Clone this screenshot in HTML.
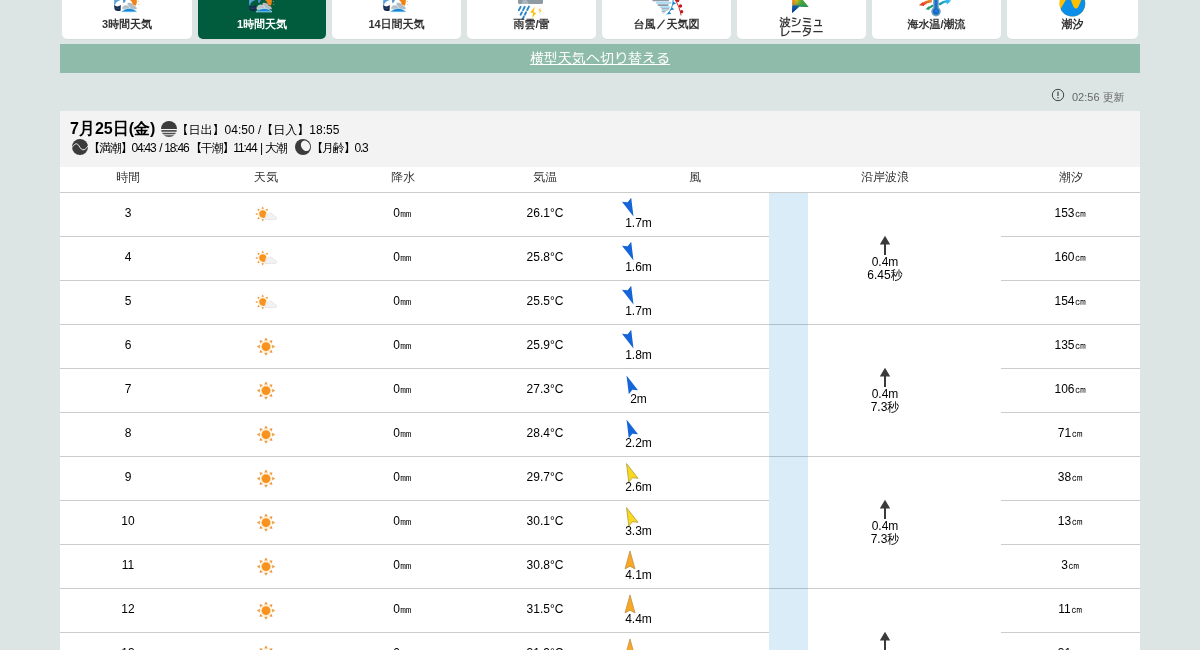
<!DOCTYPE html>
<html lang="ja">
<head>
<meta charset="utf-8">
<title>1時間天気</title>
<style>
*{box-sizing:border-box}
html,body{margin:0;padding:0}
body{background:#dce5e3;font-family:"Liberation Sans","WenQuanYi Zen Hei Mono","WenQuanYi Zen Hei",sans-serif;font-size:12px;line-height:14px;color:#000;overflow:hidden;width:1200px;height:650px}
.wrap{position:relative;width:1080px;margin:0 auto;will-change:transform}
.defs{position:absolute;width:0;height:0;overflow:hidden}
.tabs{position:relative;height:39px;margin:0;padding:0;list-style:none}
.tabs li{position:absolute;top:0;height:39px;background:#fff;border-radius:0 0 5px 5px;text-align:center;color:#333;font-weight:900;font-size:11px;line-height:12px;box-shadow:0 1px 0 rgba(0,0,0,.03)}
.tabs li.on{background:#005c3c;color:#fff}
.tabs li svg{position:absolute;top:0;width:40px;height:20px;overflow:hidden}
.tabs li span{position:absolute;left:0;right:0;top:18px}
.tabs li span.two{top:17px;line-height:10px}
.tabs li:nth-child(1){left:2px;width:130px}
.tabs li:nth-child(2){left:138px;width:128px}
.tabs li:nth-child(3){left:272px;width:129px}
.tabs li:nth-child(4){left:407px;width:129px}
.tabs li:nth-child(5){left:542px;width:129px}
.tabs li:nth-child(6){left:677px;width:129px}
.tabs li:nth-child(7){left:812px;width:129px}
.tabs li:nth-child(8){left:947px;width:131px}
.sw{display:block;margin-top:5px;height:29px;background:#8fbcaa;color:#fff;text-align:center;font-size:14px;line-height:16px;padding-top:6px;text-decoration:underline}
.upd{height:38px;position:relative;color:#666;font-size:11px;line-height:12px}
.upd svg{position:absolute;left:991px;top:15px;width:14px;height:14px}
.upd span{position:absolute;left:1012px;top:18px;white-space:nowrap}
.card{background:#fff}
.dh{height:56px;background:#f3f3f3;position:relative;color:#000}
.dh div{position:absolute;white-space:nowrap;line-height:14px}
.dh b{position:absolute;left:10px;top:9px;font-size:16px;font-weight:900;line-height:18px;color:#000;white-space:nowrap}
.dh svg{position:absolute;width:18px;height:18px}
.dh .t1{left:116.6px;top:12px}
.dh .t2{left:28.3px;top:30px;letter-spacing:-1.2px}
.dh .t3{left:251.3px;top:30px;letter-spacing:-1.2px}
.dh .i1{left:100px;top:9px}
.dh .i2{left:11px;top:27px}
.dh .i3{left:234px;top:27px}
table.wt{border-collapse:separate;border-spacing:0;table-layout:fixed;width:1080px}
.wt th{height:26px;padding:3px 0 0;font-weight:normal;color:#333;border-bottom:1px solid #ccc;text-align:center;vertical-align:top;line-height:14px}
.wt td{height:44px;padding:13px 0 0;text-align:center;border-bottom:1px solid #ccc;vertical-align:top;line-height:14px}
.c1{width:136px}.c2{width:139px}.c3{width:135px}.c4{width:150px}.c5{width:149px}.c6{width:232px}.c7{width:139px}
.wt td.ic{padding:0;position:relative}
.wi{position:absolute;left:50%;top:9px;margin-left:-12px;width:24px;height:24px}
.wt td.wd{padding:0;position:relative}
.wa{position:absolute;left:0;top:5px;width:20px;height:20px}
.wd span{position:absolute;left:0;top:23px;width:37px;text-align:center}
.wb{fill:#1565d8}.wy{fill:#f8d820;stroke:#b39a3a;stroke-width:.7}.wo{fill:#f9a825;stroke:#b8863c;stroke-width:.7}
.wt td.wv{position:relative;padding:0}
.bar{position:absolute;left:0;top:0;bottom:-1px;width:39px;background:rgba(0,127,204,.15)}
.wt tr:first-child td.wv .bar{top:0}
.wvc{position:absolute;left:0;right:0;top:41.5px}
.wvc p{margin:0;line-height:13px;position:relative;top:1px}
.up{display:block;width:20px;height:20px;margin:0 auto;position:relative;left:-.3px}
.dh .t2 i{font-style:normal}
.wt th.c2,.wt th.c3,.wt th.c5,.wt th.c7{padding-left:1px}
</style>
</head>
<body>
<svg class="defs" aria-hidden="true">
<defs>
<linearGradient id="gw" x1="0" y1="0" x2="0" y2="1"><stop offset="0" stop-color="#f2c40c"/><stop offset=".32" stop-color="#8fb03a"/><stop offset=".5" stop-color="#0c56a8"/><stop offset="1" stop-color="#083a86"/></linearGradient>
<linearGradient id="gg" x1="0" y1="0" x2="1" y2="0"><stop offset="0" stop-color="#2ea043" stop-opacity="0"/><stop offset=".45" stop-color="#2ea043" stop-opacity=".85"/><stop offset="1" stop-color="#2a9a40"/></linearGradient>
<linearGradient id="go" x1="0" y1="0" x2="1" y2="0"><stop offset="0" stop-color="#e8761e"/><stop offset="1" stop-color="#e8761e" stop-opacity="0"/></linearGradient>
<linearGradient id="gr" x1="1" y1="0" x2="0" y2="1"><stop offset="0" stop-color="#f08a24"/><stop offset="1" stop-color="#e0402a"/></linearGradient>
<linearGradient id="gc" x1="0" y1="1" x2="1" y2="0"><stop offset="0" stop-color="#12909c"/><stop offset="1" stop-color="#2bb8ee"/></linearGradient>
<symbol id="dart" viewBox="0 0 20 20"><path d="M10 0.9 L15 18.9 L10 16.2 L5 18.9 Z" stroke-linejoin="round"/></symbol>
<symbol id="up" viewBox="0 0 20 20"><path d="M10 0.8 L15.2 9.6 L11 9.6 L11 20 L9 20 L9 9.6 L4.8 9.6 Z" fill="#3a3a3a"/></symbol>
<symbol id="i-sun" viewBox="0 -0.6 24 24"><circle cx="12" cy="12" r="5.9" fill="#fff1d8"/><circle cx="12" cy="12" r="4.4" fill="#f7931e"/><g fill="#ea9a45"><path d="M12 2.9 L13.9 5.8 L10.1 5.8 Z"/><path d="M12 2.9 L13.9 5.8 L10.1 5.8 Z" transform="rotate(45 12 12)"/><path d="M12 2.9 L13.9 5.8 L10.1 5.8 Z" transform="rotate(90 12 12)"/><path d="M12 2.9 L13.9 5.8 L10.1 5.8 Z" transform="rotate(135 12 12)"/><path d="M12 2.9 L13.9 5.8 L10.1 5.8 Z" transform="rotate(180 12 12)"/><path d="M12 2.9 L13.9 5.8 L10.1 5.8 Z" transform="rotate(225 12 12)"/><path d="M12 2.9 L13.9 5.8 L10.1 5.8 Z" transform="rotate(270 12 12)"/><path d="M12 2.9 L13.9 5.8 L10.1 5.8 Z" transform="rotate(315 12 12)"/></g></symbol>
<symbol id="i-pc" viewBox="0 0 24 24"><circle cx="8.7" cy="12" r="4.9" fill="#fff1d8"/><g fill="#e8963f"><path d="M8.7 4.6 L10 6.7 L7.4 6.7 Z"/><path d="M8.7 4.6 L10 6.7 L7.4 6.7 Z" transform="rotate(45 8.7 12)"/><path d="M8.7 4.6 L10 6.7 L7.4 6.7 Z" transform="rotate(-45 8.7 12)"/><path d="M8.7 4.6 L10 6.7 L7.4 6.7 Z" transform="rotate(-90 8.7 12)"/><path d="M8.7 4.6 L10 6.7 L7.4 6.7 Z" transform="rotate(-135 8.7 12)"/><path d="M8.7 4.6 L10 6.7 L7.4 6.7 Z" transform="rotate(180 8.7 12)"/></g><path d="M5.3 12 a3.4 3.6 0 0 1 3.4 -3.8 c2 0 3.3 1.3 3.6 2.6 L10.6 16 C7.6 16 5.3 14.4 5.3 12 Z" fill="#f7931e"/><path d="M11 17.6 c0.2 -3 1.4 -5.6 4.4 -6.4 c2.4 -0.4 4.2 1 5 3.2 c1.4 0 2.2 0.9 2.2 1.7 c0 0.9 -0.7 1.5 -1.6 1.5 Z" fill="#f2f2f5" stroke="#d9d9df" stroke-width=".6"/></symbol>
<symbol id="t-w" viewBox="0 0 40 20"><path d="M7.2 0 L13.6 0 C11 1 9.4 2 8.6 3.4 C8 4.6 8 5.6 8.4 6.6 L7.4 6.4 C7 4.4 7 2 7.2 0 Z" fill="#5aa2da"/><path d="M7.3 5 C8.6 6.8 11.4 6.9 13.9 5.1 C13.7 7 13.6 9 13.8 10.4 C11.8 11.3 9.4 11.2 8.2 10.2 C7.3 9 7.1 7 7.3 5 Z" fill="#14294a"/><path d="M8.3 7.2 C9.8 8.1 11.4 8 12.8 7.4 L12.6 8.4 C11.2 9 9.6 9 8.6 8.4 Z" fill="#2a4d7a"/><path d="M16 0 L18.8 0 C18.6 1.4 17.6 2.6 16.4 3.2 Z" fill="#4d94cc"/><path d="M22.8 0 L29.8 0 C30 2.4 29.6 4.4 28.6 5.8 L25.6 4.4 C25.4 2.4 24.4 0.9 22.8 0 Z" fill="#ee8418"/><circle cx="31.3" cy="1.4" r=".5" fill="#f0a050"/><circle cx="31.9" cy="4.5" r=".5" fill="#f0a050"/><path d="M20.6 3.1 C23.4 2.2 25.8 3.6 26.6 5.6 C28.6 5.8 29.8 7.4 29.9 9.3 L21 9.3 C20.8 7 20.4 5 20.6 3.1 Z" fill="#b3bcc4"/><path d="M15 9.3 C14.6 6.8 16.4 4.8 19 4.9 C20.6 5 22 5.8 22.8 7.2 L23 9.3 Z" fill="#b8c0c8" stroke="#fff" stroke-width=".5"/><path d="M14.2 11.9 C17 9.2 20 8.2 22.8 8.4 C25.6 8.6 28.2 9.8 30 11.9 Z" fill="#1a86d4" stroke="#bfeafc" stroke-width=".7"/></symbol>
</defs>
</svg>
<div class="wrap">
<ul class="tabs">
<li><svg style="left:45px" viewBox="0 0 40 20"><use href="#t-w"/></svg><span>3時間天気</span></li>
<li class="on"><svg style="left:44px" viewBox="0 0 40 20"><use href="#t-w"/></svg><span>1時間天気</span></li>
<li><svg style="left:44px" viewBox="0 0 40 20"><use href="#t-w"/></svg><span>14日間天気</span></li>
<li><svg style="left:44px" viewBox="511 0 40 20"><path d="M518 0 H543 V2.8 a1.1 1.1 0 0 1 -1.1 1.1 H519.1 a1.1 1.1 0 0 1 -1.1 -1.1 Z" fill="#8f9ba3"/><path d="M523 0 L526.5 0 L529 3.9 L521.5 3.9 Z" fill="#a9b6bd"/><g stroke="#2a85c8" stroke-width="1.9" stroke-linecap="round" fill="none"><path d="M520.6 6.8 L518.9 10.2"/><path d="M524.7 6.8 L523 10.2"/><path d="M528.9 6.6 L527.2 10"/><path d="M521.9 12.3 L520.6 14.7"/><path d="M526.1 12.3 L524.8 14.7"/><path d="M523.8 16.6 L522.4 19.6"/></g><path d="M535 6.8 L530 12.4 L533 13 L532.3 18 L536.2 13 L533.6 12.2 Z" fill="#fdc30e"/><path d="M540.3 7.4 L538.2 10.4 L539.8 10.8 L539.4 13.4 L541.8 10.6 L540.2 10.1 Z" fill="#f5c533"/></svg><span>雨雲/雷</span></li>
<li><svg style="left:44.5px" viewBox="646.5 0 40 20"><g stroke-linecap="round" fill="none"><path d="M652.8 .5 H667.6" stroke="#8997a6" stroke-width="1.7"/><path d="M656.4 2.7 H670" stroke="#a6d7f0" stroke-width="2"/><path d="M657.8 5.1 H667.4" stroke="#8c99a8" stroke-width="1.6"/><path d="M660 7.1 H668.8" stroke="#a9d9f1" stroke-width="1.6"/><path d="M661.6 8.9 H668.2" stroke="#8f9caa" stroke-width="1.4"/><path d="M661.8 10.4 H666.6" stroke="#a9d9f1" stroke-width="1.2"/><path d="M661.6 11.7 H664.8" stroke="#93a0ad" stroke-width="1"/><path d="M662.6 13.1 H663.6" stroke="#a8b4be" stroke-width=".8"/></g><path d="M672.6 0 C672.4 5.6 670.6 10.6 666.3 14.6" stroke="#1b86cc" stroke-width=".9" fill="none"/><path d="M672.7 1.6 L675.6 3.5 L672.2 5 Z M671.4 7.2 L673.8 9.6 L669.8 10.2 Z M668.9 11.4 L670.6 14 L666.6 14.2 Z" fill="#1b86cc"/><path d="M674.8 0 C677.6 4.6 679.6 9.6 680.6 15.4" stroke="#c4161c" stroke-width=".9" fill="none"/><circle cx="677.1" cy=".5" r="1.8" fill="#c4161c"/><circle cx="680" cy="6" r="1.7" fill="#c4161c"/><circle cx="681.2" cy="11.7" r="1.6" fill="#c4161c"/></svg><span>台風／天気図</span></li>
<li><svg style="left:44.2px" viewBox="781.5 0 40 20"><path d="M792.9 0 L803.3 0 L809 6.9 L800 6.4 L792.9 12.9 C792.4 12.2 792.4 11.6 792.5 11 Z" fill="url(#gw)"/><path d="M797 0 L803.3 0 L809 6.9 L800 6.4 L796.4 9.7 Z" fill="url(#gg)"/><path d="M792.9 0 L797.4 0 L797.2 4.4 L792.8 5.2 Z" fill="url(#go)"/></svg><span class="two">波シミュ<br>レーター</span></li>
<li><svg style="left:44px" viewBox="916.5 0 40 20"><path d="M932.4 .9 C928.6 1 925.4 2.6 922.8 4.6" stroke="url(#gr)" stroke-width="2.6" fill="none"/><path d="M919.4 5.3 L923.4 2 L924.6 6 Z" fill="#e2452a"/><path d="M933.6 5.2 C931.8 6.8 930 7.8 928.4 8.3" stroke="#1f9d6c" stroke-width="2.2" fill="none"/><path d="M926 9.2 L929.4 6.3 L930 10 Z" fill="#1f9d6c"/><path d="M939.6 4.6 C942.6 2.4 945.8 1.2 949.4 .9" stroke="url(#gc)" stroke-width="2.4" fill="none"/><path d="M951.8 .4 L947.4 4.6 L946.6 0 Z" fill="#2bb8ee"/><rect x="933.7" y="-2" width="5.6" height="12" rx="2.6" fill="#6fa3b8"/><circle cx="936.5" cy="11.6" r="4.8" fill="#6fa3b8"/><rect x="935" y="-2" width="3" height="12" fill="#1a6fd0"/><circle cx="936.5" cy="11.6" r="3.2" fill="#1668cc"/><circle cx="936.8" cy="11" r="1.2" fill="#2f80dc"/></svg><span>海水温/潮流</span></li>
<li><svg style="left:45.3px" viewBox="1052.5 0 40 20"><clipPath id="cc"><circle cx="1072.8" cy="3.5" r="12.95"/></clipPath><circle cx="1072.8" cy="3.5" r="12.95" fill="#fcc000"/><path clip-path="url(#cc)" d="M1058 12 C1062 9 1064.2 3 1066.4 0 C1068 -2 1070.4 -2 1071.4 0 C1073 3.6 1073.8 8.5 1076.4 8.5 C1079 8.5 1080 3.8 1081.8 0 L1090 -4 L1090 20 L1056 20 Z" fill="#0b8fe8"/></svg><span>潮汐</span></li>
</ul>
<a class="sw">横型天気へ切り替える</a>
<div class="upd"><svg viewBox="0 0 14 14"><circle cx="7" cy="7" r="5.7" fill="none" stroke="#444" stroke-width="1"/><rect x="6.4" y="3.5" width="1.2" height="4.5" fill="#444"/><rect x="6.4" y="9" width="1.2" height="1.4" fill="#444"/></svg><span>02:56 更新</span></div>
<div class="card">
<div class="dh">
<b>7月25日(金)</b>
<svg class="i1" viewBox="0 0 18 18"><clipPath id="c1"><circle cx="9" cy="9" r="8"/></clipPath><g clip-path="url(#c1)" fill="#3b3b3b"><rect x="0" y="0" width="18" height="9"/><rect x="0" y="10" width="18" height="1.8" fill="#555"/><rect x="0" y="12.8" width="18" height="1.5" fill="#4a4a4a"/><rect x="0" y="15.2" width="18" height="2.8" fill="#555"/></g></svg>
<div class="t1">【日出】04:50 /【日入】18:55</div>
<svg class="i2" viewBox="0 0 18 18"><circle cx="9" cy="9" r="8" fill="#3b3b3b"/><path d="M1 9.6 C3 6.2 5.2 5 6.8 6.4 C8.6 8 9.6 11.6 11.8 11.8 C13.6 12 15.4 10.4 17 8" stroke="#f3f3f3" stroke-width="1" fill="none"/></svg>
<div class="t2">【満潮】04:43<i style="margin-left:1.7px"> </i>/<i style="margin-left:.7px"> </i>18:46<i style="margin-left:1.8px">【干潮】11:44</i><i style="margin-left:1.3px"> </i>|<i style="margin-left:1.2px"> </i>大潮</div>
<svg class="i3" viewBox="0 0 18 18"><circle cx="9" cy="9" r="8" fill="#3b3b3b"/><ellipse cx="11.5" cy="7.8" rx="4.3" ry="5.5" transform="rotate(-28 11.5 7.8)" fill="#f3f3f3"/></svg>
<div class="t3">【月齢】0.3</div>
</div>
<table class="wt">
<thead><tr><th class="c1">時間</th><th class="c2">天気</th><th class="c3">降水</th><th class="c4">気温</th><th class="c5">風</th><th class="c6">沿岸波浪</th><th class="c7">潮汐</th></tr></thead>
<tbody>
<tr><td>3</td><td class="ic"><svg class="wi" viewBox="0 0 24 24"><use href="#i-pc"/></svg></td><td>0㎜</td><td>26.1°C</td><td class="wd"><svg class="wa wb" viewBox="0 0 20 20" style="transform:rotate(157.5deg)"><use href="#dart"/></svg><span>1.7m</span></td><td class="wv" rowspan="3"><div class="bar"></div><div class="wvc"><svg class="up" viewBox="0 0 20 20"><use href="#up"/></svg><p>0.4m</p><p>6.45秒</p></div></td><td>153㎝</td></tr>
<tr><td>4</td><td class="ic"><svg class="wi" viewBox="0 0 24 24"><use href="#i-pc"/></svg></td><td>0㎜</td><td>25.8°C</td><td class="wd"><svg class="wa wb" viewBox="0 0 20 20" style="transform:rotate(157.5deg)"><use href="#dart"/></svg><span>1.6m</span></td><td>160㎝</td></tr>
<tr><td>5</td><td class="ic"><svg class="wi" viewBox="0 0 24 24"><use href="#i-pc"/></svg></td><td>0㎜</td><td>25.5°C</td><td class="wd"><svg class="wa wb" viewBox="0 0 20 20" style="transform:rotate(157.5deg)"><use href="#dart"/></svg><span>1.7m</span></td><td>154㎝</td></tr>
<tr><td>6</td><td class="ic"><svg class="wi" viewBox="0 0 24 24"><use href="#i-sun"/></svg></td><td>0㎜</td><td>25.9°C</td><td class="wd"><svg class="wa wb" viewBox="0 0 20 20" style="transform:rotate(157.5deg)"><use href="#dart"/></svg><span>1.8m</span></td><td class="wv" rowspan="3"><div class="bar"></div><div class="wvc"><svg class="up" viewBox="0 0 20 20"><use href="#up"/></svg><p>0.4m</p><p>7.3秒</p></div></td><td>135㎝</td></tr>
<tr><td>7</td><td class="ic"><svg class="wi" viewBox="0 0 24 24"><use href="#i-sun"/></svg></td><td>0㎜</td><td>27.3°C</td><td class="wd"><svg class="wa wb" viewBox="0 0 20 20" style="transform:rotate(-22.5deg)"><use href="#dart"/></svg><span>2m</span></td><td>106㎝</td></tr>
<tr><td>8</td><td class="ic"><svg class="wi" viewBox="0 0 24 24"><use href="#i-sun"/></svg></td><td>0㎜</td><td>28.4°C</td><td class="wd"><svg class="wa wb" viewBox="0 0 20 20" style="transform:rotate(-22.5deg)"><use href="#dart"/></svg><span>2.2m</span></td><td>71㎝</td></tr>
<tr><td>9</td><td class="ic"><svg class="wi" viewBox="0 0 24 24"><use href="#i-sun"/></svg></td><td>0㎜</td><td>29.7°C</td><td class="wd"><svg class="wa wy" viewBox="0 0 20 20" style="transform:rotate(-22.5deg)"><use href="#dart"/></svg><span>2.6m</span></td><td class="wv" rowspan="3"><div class="bar"></div><div class="wvc"><svg class="up" viewBox="0 0 20 20"><use href="#up"/></svg><p>0.4m</p><p>7.3秒</p></div></td><td>38㎝</td></tr>
<tr><td>10</td><td class="ic"><svg class="wi" viewBox="0 0 24 24"><use href="#i-sun"/></svg></td><td>0㎜</td><td>30.1°C</td><td class="wd"><svg class="wa wy" viewBox="0 0 20 20" style="transform:rotate(-22.5deg)"><use href="#dart"/></svg><span>3.3m</span></td><td>13㎝</td></tr>
<tr><td>11</td><td class="ic"><svg class="wi" viewBox="0 0 24 24"><use href="#i-sun"/></svg></td><td>0㎜</td><td>30.8°C</td><td class="wd"><svg class="wa wo" viewBox="0 0 20 20" style="transform:rotate(0deg)"><use href="#dart"/></svg><span>4.1m</span></td><td>3㎝</td></tr>
<tr><td>12</td><td class="ic"><svg class="wi" viewBox="0 0 24 24"><use href="#i-sun"/></svg></td><td>0㎜</td><td>31.5°C</td><td class="wd"><svg class="wa wo" viewBox="0 0 20 20" style="transform:rotate(0deg)"><use href="#dart"/></svg><span>4.4m</span></td><td class="wv" rowspan="3"><div class="bar"></div><div class="wvc"><svg class="up" viewBox="0 0 20 20"><use href="#up"/></svg><p>0.4m</p><p>7.3秒</p></div></td><td>11㎝</td></tr>
<tr><td>13</td><td class="ic"><svg class="wi" viewBox="0 0 24 24"><use href="#i-sun"/></svg></td><td>0㎜</td><td>31.9°C</td><td class="wd"><svg class="wa wo" viewBox="0 0 20 20" style="transform:rotate(0deg)"><use href="#dart"/></svg><span>4.6m</span></td><td>31㎝</td></tr>
<tr><td>14</td><td class="ic"><svg class="wi" viewBox="0 0 24 24"><use href="#i-sun"/></svg></td><td>0㎜</td><td>32.1°C</td><td class="wd"><svg class="wa wo" viewBox="0 0 20 20" style="transform:rotate(0deg)"><use href="#dart"/></svg><span>4.8m</span></td><td>58㎝</td></tr>
</tbody>
</table>
</div>
</div>
</body>
</html>
